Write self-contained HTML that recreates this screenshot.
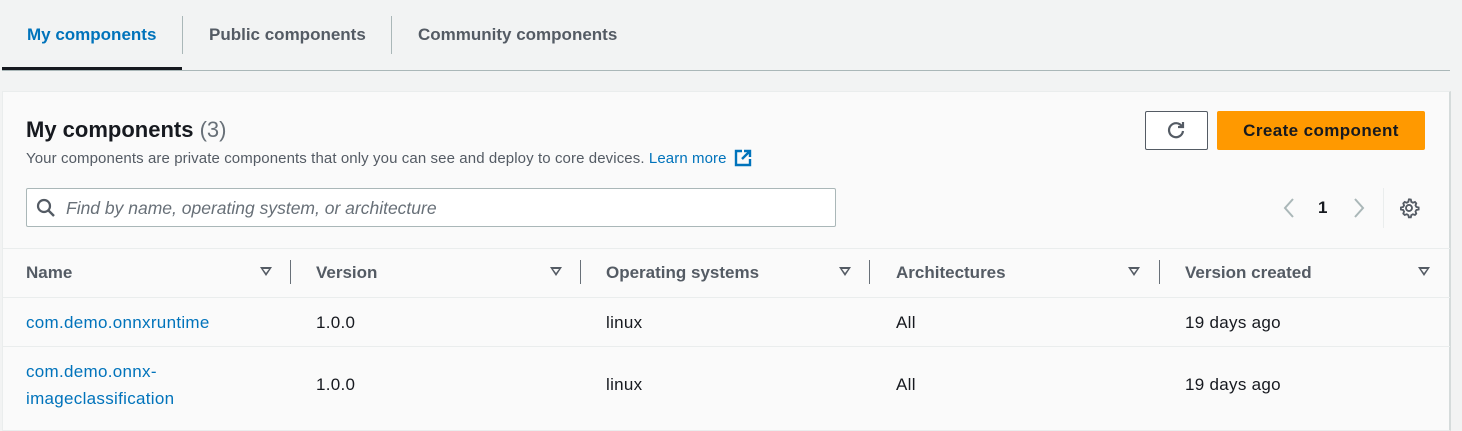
<!DOCTYPE html>
<html><head><style>
*{box-sizing:border-box;margin:0;padding:0}
body{width:1462px;height:419px;overflow:hidden;background:#f2f3f3;font-family:"Liberation Sans",sans-serif;color:#16191f;position:relative}
.a{position:absolute;white-space:nowrap}
.tab{font-weight:bold;font-size:17px;color:#545b64;top:25px}
.sep{position:absolute;width:1px;background:#aab7b8}
.card{position:absolute;left:2px;top:91px;width:1449px;height:340px;background:#fafafa;border:1px solid #eaeded;border-right:2px solid #d5dbdb}
.hl{position:absolute;left:0;width:1447px;height:1px;background:#eaeded}
.th{font-weight:bold;font-size:17px;color:#545b64;top:263px}
.td{font-size:17px;letter-spacing:0.3px;color:#16191f}
.lk{color:#0073bb}
.tri{position:absolute;top:267px;width:0;height:0;border-left:6px solid transparent;border-right:6px solid transparent;border-top:9px solid #545b64}
.tri:after{content:"";position:absolute;left:-3px;top:-7px;border-left:3px solid transparent;border-right:3px solid transparent;border-top:4px solid #fafafa}
.cd{position:absolute;top:260px;width:1px;height:24px;background:#687078}
</style></head><body>
<div class="a tab" style="left:27px;color:#0073bb">My components</div>
<div class="sep" style="left:182px;top:16px;height:38px"></div>
<div class="a tab" style="left:209px">Public components</div>
<div class="sep" style="left:391px;top:16px;height:38px"></div>
<div class="a tab" style="left:418px">Community components</div>
<div style="position:absolute;left:2px;top:70px;width:1448px;height:1px;background:#aab7b8"></div>
<div style="position:absolute;left:2px;top:67px;width:180px;height:3px;background:#16191f"></div>

<div class="card"></div>
<div class="a" style="left:26px;top:117px;font-size:22px;font-weight:bold;color:#16191f">My components <span style="font-weight:normal;color:#687078">(3)</span></div>
<div class="a" style="left:26px;top:149px;font-size:15px;letter-spacing:0.1px;color:#545b64">Your components are private components that only you can see and deploy to core devices. <span class="lk">Learn more</span>
<svg width="18" height="18" viewBox="0 0 18 18" style="vertical-align:-4px;margin-left:3px"><path d="M8 2H2v14h14v-6" fill="none" stroke="#0073bb" stroke-width="2.4"/><path d="M10 2h6v6M16 2 8 10" fill="none" stroke="#0073bb" stroke-width="2.4"/></svg></div>

<div style="position:absolute;left:1145px;top:111px;width:63px;height:39px;border:1px solid #545b64;border-radius:2px;background:#fff"></div>
<svg class="a" style="left:1165px;top:119px" width="22" height="22" viewBox="0 0 22 22"><path d="M17 7.5A7 7 0 1 0 18 12" fill="none" stroke="#545b64" stroke-width="2.2"/><path d="M18 3v5h-5" fill="none" stroke="#545b64" stroke-width="2.2"/></svg>
<div style="position:absolute;left:1217px;top:111px;width:208px;height:39px;background:#ff9900;border-radius:2px;font-weight:bold;font-size:17px;letter-spacing:0.4px;color:#16191f;text-align:center;line-height:39px">Create component</div>

<div style="position:absolute;left:26px;top:188px;width:810px;height:39px;border:1px solid #aab7b8;border-radius:2px;background:#fff"></div>
<svg class="a" style="left:36px;top:198px" width="20" height="20" viewBox="0 0 20 20"><circle cx="8" cy="8" r="6" fill="none" stroke="#545b64" stroke-width="2.2"/><path d="M12.5 12.5 18 18" stroke="#545b64" stroke-width="2.4"/></svg>
<div class="a" style="left:66px;top:198px;font-size:17.5px;font-style:italic;color:#687078">Find by name, operating system, or architecture</div>

<svg class="a" style="left:1282px;top:197px" width="14" height="22" viewBox="0 0 14 22"><path d="M11 2 3 11l8 9" fill="none" stroke="#aab7b8" stroke-width="2"/></svg>
<div class="a" style="left:1318px;top:198px;font-size:17px;font-weight:bold">1</div>
<svg class="a" style="left:1352px;top:197px" width="14" height="22" viewBox="0 0 14 22"><path d="M3 2l8 9-8 9" fill="none" stroke="#aab7b8" stroke-width="2"/></svg>
<div class="sep" style="left:1383px;top:188px;height:40px;background:#eaeded"></div>
<svg class="a" style="left:1398px;top:197px" width="22" height="22" viewBox="0 0 24 24"><path d="M12 2.5l2 .3.5 2.4 1.7 1 2.3-.8 1.4 1.5-.8 2.3 1 1.7 2.4.5v2.2l-2.4.5-1 1.7.8 2.3-1.4 1.5-2.3-.8-1.7 1-.5 2.4h-2.2l-.5-2.4-1.7-1-2.3.8-1.5-1.5.8-2.3-1-1.7-2.4-.5v-2.2l2.4-.5 1-1.7-.8-2.3 1.5-1.5 2.300.8 1.7-1 .5-2.4z" fill="none" stroke="#545b64" stroke-width="2"/><circle cx="12" cy="12" r="3.3" fill="none" stroke="#545b64" stroke-width="2"/></svg>

<div class="hl" style="left:3px;top:248px"></div>
<div class="hl" style="left:3px;top:297px"></div>
<div class="hl" style="left:3px;top:346px"></div>

<div class="a th" style="left:26px">Name</div><div class="tri" style="left:260px"></div><div class="cd" style="left:290px"></div>
<div class="a th" style="left:316px">Version</div><div class="tri" style="left:550px"></div><div class="cd" style="left:580px"></div>
<div class="a th" style="left:606px">Operating systems</div><div class="tri" style="left:839px"></div><div class="cd" style="left:869px"></div>
<div class="a th" style="left:896px">Architectures</div><div class="tri" style="left:1128px"></div><div class="cd" style="left:1159px"></div>
<div class="a th" style="left:1185px">Version created</div><div class="tri" style="left:1418px"></div>

<div class="a td lk" style="left:26px;top:313px">com.demo.onnxruntime</div>
<div class="a td" style="left:316px;top:313px">1.0.0</div>
<div class="a td" style="left:606px;top:313px">linux</div>
<div class="a td" style="left:896px;top:313px">All</div>
<div class="a td" style="left:1185px;top:313px">19 days ago</div>

<div class="a td lk" style="left:26px;top:358px;line-height:27px">com.demo.onnx-<br>imageclassification</div>
<div class="a td" style="left:316px;top:375px">1.0.0</div>
<div class="a td" style="left:606px;top:375px">linux</div>
<div class="a td" style="left:896px;top:375px">All</div>
<div class="a td" style="left:1185px;top:375px">19 days ago</div>
</body></html>
